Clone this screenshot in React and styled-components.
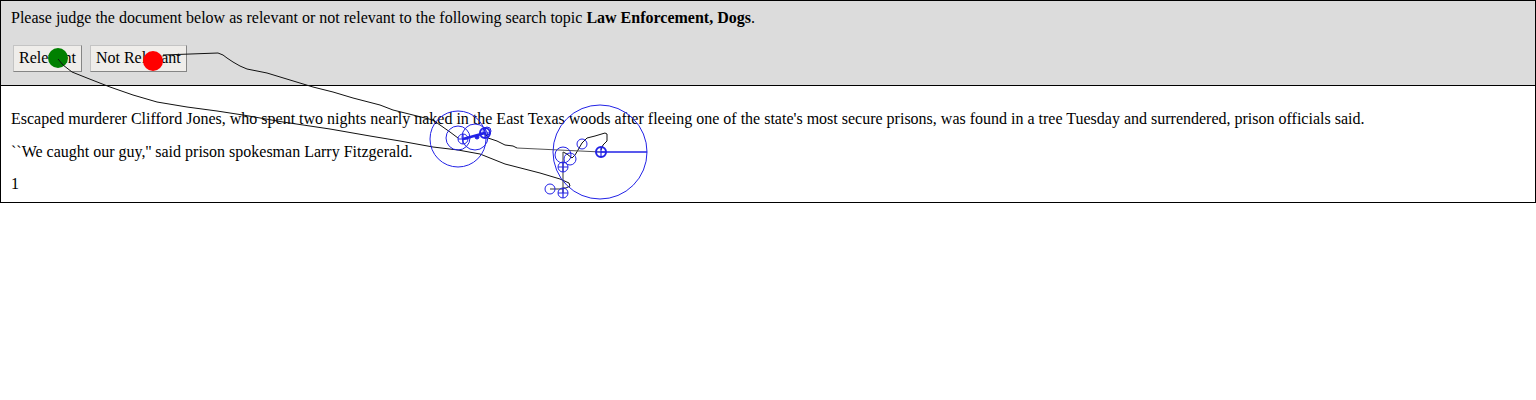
import React from 'react';
import styled, { createGlobalStyle } from 'styled-components';

const GlobalStyle = createGlobalStyle`
  html, body {
    margin: 0;
    padding: 0;
    background: #fff;
  }
  body {
    font-family: "Liberation Serif", "Times New Roman", serif;
    font-size: 16px;
    color: #000;
  }
`;

const Page = styled.div`
  position: relative;
  width: 1536px;
  height: 400px;
`;

const Frame = styled.div`
  box-sizing: border-box;
  width: 100%;
  border: 1px solid #000;
`;

const Prompt = styled.div`
  background: #dcdcdc;
  border-bottom: 1px solid #000;
  padding: 9px 10px 13px;
`;

const Instruction = styled.p`
  margin: 0;
  line-height: 16.5px;
`;

const ButtonRow = styled.div`
  display: flex;
  gap: 8px;
  margin: 18.5px 0 0 2px;
`;

const JudgeButton = styled.button`
  box-sizing: border-box;
  height: 27px;
  padding: 0 5px;
  font-family: "Liberation Serif", "Times New Roman", serif;
  font-size: 16px;
  line-height: 16.5px;
  color: #000;
  background: #efedea;
  border: 1px solid;
  border-color: #c4c4c4 #858585 #858585 #c4c4c4;
  border-radius: 0;
`;

const Doc = styled.div`
  background: #fff;
  padding: 9px 10px 9.5px;
`;

const Para = styled.p`
  margin: 16px 0 0;
  line-height: 16.5px;
`;

const Overlay = styled.svg`
  position: absolute;
  top: 0;
  left: 0;
  pointer-events: none;
`;

// mouse trace recorded over the page
const traceGreen =
  'M58,59 L63,65 L72,72 L87,78 L110,87 L133,95 L157,102 L187,107 L217,111 L243,115 L283,122 L330,129 L370,136 L400,141 L433,147 L458,150 L480,154 L505,164 L540,173 L560,179 L569,183 L570,186 L566,188 L563,188';
const traceRed =
  'M163,55 L218,53 L223,55 L227,58 L233,62 L240,66 L247,69 L267,73 L290,80 L313,87 L333,92 L353,98 L380,105 L393,110 L413,115 L433,120 L440,125 L450,132 L458,138';
const traceTail = 'M485,133 L488,138 L497,141 L505,145 L513,146 L517,148';
const traceLoop =
  'M601,150 L603,145 L607,141 L607,134 L605,133 L595,136 L587,138 L582,143 L578,150 L575,155 L572,158 L567,154 L563,152';

const rings = [
  { x: 458, y: 139, r: 28 },
  { x: 458, y: 138, r: 12 },
  { x: 475, y: 137, r: 13 },
  { x: 463, y: 139, r: 5, mark: true },
  { x: 485, y: 133, r: 5, mark: true, bold: true },
  { x: 487, y: 131, r: 4 },
  { x: 600, y: 152, r: 47 },
  { x: 601, y: 152, r: 5, mark: true, bold: true },
  { x: 563, y: 155, r: 8 },
  { x: 570, y: 159, r: 6 },
  { x: 582, y: 144, r: 5 },
  { x: 563, y: 167, r: 5, mark: true },
  { x: 550, y: 189, r: 5 },
  { x: 563, y: 193, r: 5, mark: true },
];

const Trace = () => (
  <Overlay width="1536" height="400" viewBox="0 0 1536 400">
    <circle cx="58" cy="58" r="10" fill="#008000" />
    <circle cx="153" cy="61" r="10" fill="#ff0000" />
    <g fill="none" stroke="#111" strokeWidth="1" strokeLinejoin="round">
      <path d={traceGreen} />
      <path d={traceRed} />
      <path d={traceTail} />
      <path d={traceLoop} />
    </g>
    <g fill="none" stroke="#555" strokeWidth="1.2">
      <path d="M517,148 L601,152" />
      <path d="M563,152 L563,193" />
      <path d="M550,189 L563,189" />
    </g>
    <g fill="none" stroke="#2222e6">
      <path d="M463,139 L485,133" strokeWidth="2.5" />
      <circle cx="477" cy="137" r="2" fill="#2222e6" />
      <path d="M601,152 L647,152" strokeWidth="1.5" />
      {rings.map((c, i) => (
        <g key={i} strokeWidth={c.bold ? 2 : 1}>
          <circle cx={c.x} cy={c.y} r={c.r} />
          {c.mark && (
            <path
              d={`M${c.x - 5},${c.y} L${c.x + 5},${c.y} M${c.x},${c.y - 5} L${c.x},${c.y + 5}`}
              strokeWidth="1.2"
            />
          )}
        </g>
      ))}
    </g>
  </Overlay>
);

const App = () => (
  <Page>
    <GlobalStyle />
    <Frame>
      <Prompt>
        <Instruction>
          Please judge the document below as relevant or not relevant to the following search topic{' '}
          <b>Law Enforcement, Dogs</b>.
        </Instruction>
        <ButtonRow>
          <JudgeButton>Relevant</JudgeButton>
          <JudgeButton>Not Relevant</JudgeButton>
        </ButtonRow>
      </Prompt>
      <Doc>
        <Para>
          Escaped murderer Clifford Jones, who spent two nights nearly naked in the East Texas woods after fleeing
          one of the state's most secure prisons, was found in a tree Tuesday and surrendered, prison officials said.
        </Para>
        <Para>``We caught our guy,'' said prison spokesman Larry Fitzgerald.</Para>
        <Para>1</Para>
      </Doc>
    </Frame>
    <Trace />
  </Page>
);

export default App;
